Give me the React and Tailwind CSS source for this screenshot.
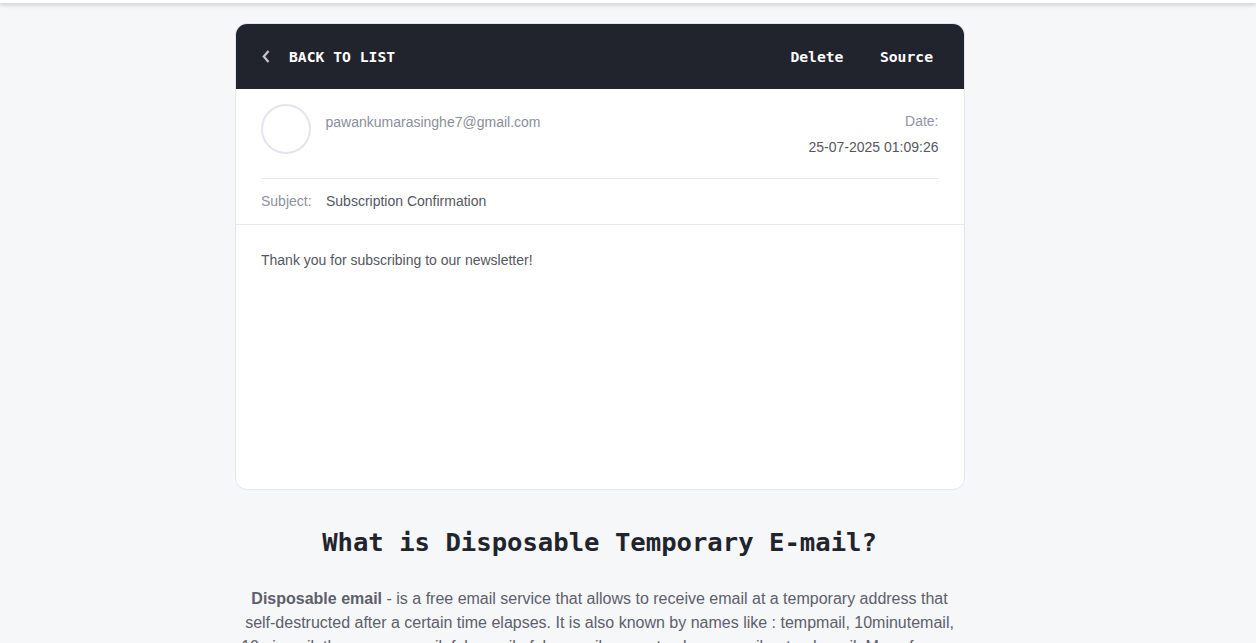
export default function App() {
  return (
    <div className="h-[643px] overflow-hidden bg-[#f6f7f9] font-['Liberation_Sans',Arial,sans-serif] text-[#54575f]">
      <header className="relative h-[3px] bg-white shadow-[0_1px_5px_rgba(0,0,0,0.28)]" />
      <main className="ml-[235px] mt-5 w-[730px]">
        <section className="flex h-[467px] flex-col overflow-hidden rounded-xl border border-[#e4e4ee] bg-white">
          <div className="flex h-[65px] shrink-0 items-center bg-[#22242d] pl-[25px] pr-[31px] pt-[2px] font-['DejaVu_Sans_Mono',monospace] text-[14.7px] font-bold text-white">
            <svg className="mb-[2px] mr-[19px] h-[13px] w-[9px]" viewBox="0 0 9 13" fill="none" stroke="#c3c1cd" strokeWidth="2.3">
              <path d="M7.5 1 L2.8 6.5 L7.5 12" />
            </svg>
            <span>BACK TO LIST</span>
            <span className="ml-auto">Delete</span>
            <span className="ml-[36.5px]">Source</span>
          </div>
          <div className="mx-[25px] flex h-[90px] shrink-0 border-b border-[#e8e8f1] pt-[15px] text-sm">
            <div className="size-[50px] rounded-full border-2 border-[#e4e4ef]" />
            <span className="ml-[14.5px] mt-2 leading-5 text-[#8b8e9b]">pawankumarasinghe7@gmail.com</span>
            <div className="ml-auto mr-[0.5px] mt-1 text-right leading-[26px]">
              <div className="text-[#9193a3]">Date:</div>
              <div>25-07-2025 01:09:26</div>
            </div>
          </div>
          <div className="flex h-[46px] shrink-0 items-center border-b border-[#e8e8f1] px-[25px] pb-[2px] text-sm">
            <span className="w-[65px] text-[#8f91a1]">Subject:</span>
            <span>Subscription Confirmation</span>
          </div>
          <p className="px-[25px] pt-[25px] text-sm">Thank you for subscribing to our newsletter!</p>
        </section>
        <h2 className="-ml-px mt-[36px] whitespace-nowrap text-center font-['DejaVu_Sans_Mono',monospace] text-[25.6px] font-bold leading-8 text-[#22242d]">
          What is Disposable Temporary E-mail?
        </h2>
        <p className="-ml-px mt-[29px] text-center text-base leading-6 whitespace-nowrap text-[#5d606b]">
          <b>Disposable email</b> - is a free email service that allows to receive email at a temporary address that
          <br />
          self-destructed after a certain time elapses. It is also known by names like : tempmail, 10minutemail,
          <br />
          10minmail, throwaway email, fake-mail , fake email generator, burner mail or trash-mail. Many forums
        </p>
      </main>
    </div>
  );
}
